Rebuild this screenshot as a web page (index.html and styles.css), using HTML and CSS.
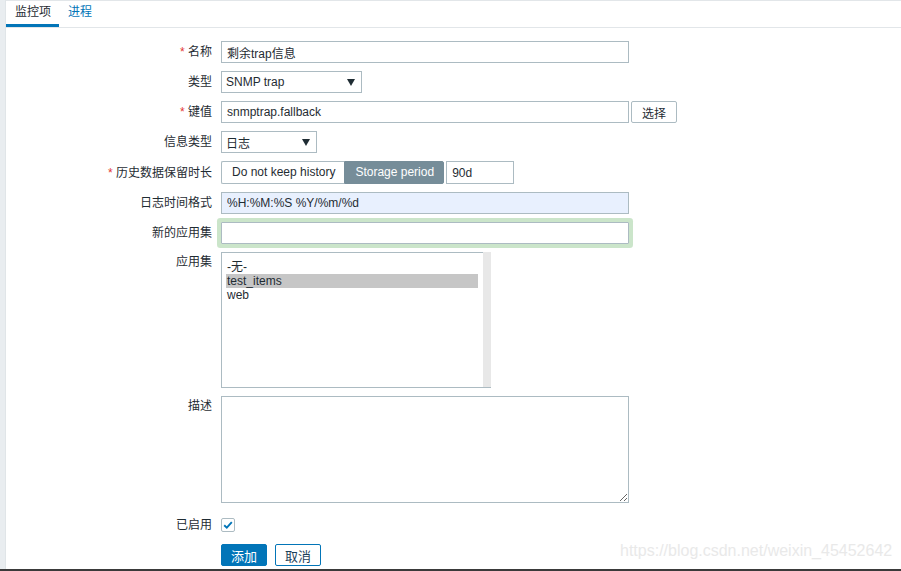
FILE: index.html
```html
<!DOCTYPE html>
<html lang="zh">
<head>
<meta charset="utf-8">
<title>监控项</title>
<link rel="stylesheet" href="styles.css">
</head>
<body>
<div class="page">
  <div class="sidebar"></div>
  <div class="main">
    <div class="tabs">
      <div class="tab active">监控项</div>
      <div class="tab link">进程</div>
    </div>
    <div class="form">
      <div class="row">
        <div class="label"><span class="req">*</span> 名称</div>
        <div class="field"><input class="text w408" value="剩余trap信息"></div>
      </div>
      <div class="row">
        <div class="label">类型</div>
        <div class="field">
          <div class="select w141"><span>SNMP trap</span><svg class="arrow" width="8" height="7" viewBox="0 0 8 7"><polygon points="0,0 8,0 4,7" fill="#1f2c33"/></svg></div>
        </div>
      </div>
      <div class="row">
        <div class="label"><span class="req">*</span> 键值</div>
        <div class="field"><input class="text w408" value="snmptrap.fallback"><button class="btn-grey">选择</button></div>
      </div>
      <div class="row">
        <div class="label">信息类型</div>
        <div class="field">
          <div class="select w96"><span>日志</span><svg class="arrow" width="8" height="7" viewBox="0 0 8 7"><polygon points="0,0 8,0 4,7" fill="#1f2c33"/></svg></div>
        </div>
      </div>
      <div class="row tall">
        <div class="label"><span class="req">*</span> 历史数据保留时长</div>
        <div class="field">
          <div class="seg">
            <div class="seg-btn">Do not keep history</div>
            <div class="seg-btn on">Storage period</div>
          </div>
          <input class="text w68 h23" value="90d">
        </div>
      </div>
      <div class="row">
        <div class="label">日志时间格式</div>
        <div class="field"><input class="text w408 filled" value="%H:%M:%S %Y/%m/%d"></div>
      </div>
      <div class="row">
        <div class="label">新的应用集</div>
        <div class="field"><input class="text w408 focus" value=""></div>
      </div>
      <div class="row top">
        <div class="label">应用集</div>
        <div class="field">
          <div class="listbox">
            <div class="items">
              <div class="item">-无-</div>
              <div class="item sel">test_items</div>
              <div class="item">web</div>
            </div>
            <div class="track"></div>
          </div>
        </div>
      </div>
      <div class="row top">
        <div class="label">描述</div>
        <div class="field"><textarea class="area"></textarea></div>
      </div>
      <div class="row check-row">
        <div class="label">已启用</div>
        <div class="field">
          <div class="checkbox"><svg width="12" height="12" viewBox="0 0 12 12"><path d="M2.2 6.2 L4.8 8.6 L9.8 3.2" fill="none" stroke="#0275b8" stroke-width="1.9"/></svg></div>
        </div>
      </div>
      <div class="row buttons">
        <div class="label"></div>
        <div class="field"><button class="btn-main">添加</button><button class="btn-alt">取消</button></div>
      </div>
    </div>
  </div>
  <div class="watermark">https://blog.csdn.net/weixin_45452642</div>
  <div class="bottombar"></div>
</div>
</body>
</html>
```
FILE: styles.css
```css
* { box-sizing: border-box; }
html, body { margin: 0; padding: 0; }
body {
  width: 901px;
  height: 571px;
  overflow: hidden;
  font-family: "Liberation Sans", Arial, "Noto Sans CJK SC", sans-serif;
  font-size: 12px;
  color: #1f2c33;
  background: #fff;
}
.page {
  position: relative;
  display: flex;
  width: 901px;
  height: 571px;
}
.sidebar {
  width: 6px;
  flex: none;
  background: #e9edf0;
  border-right: 1px solid #e0e5e8;
}
.main {
  flex: 1;
  background: #fff;
  border-top: 1px solid #e2e6e9;
}
.tabs {
  display: flex;
  height: 26px;
  border-bottom: 1px solid #e2e6e9;
  box-sizing: content-box;
}
.tab {
  height: 26px;
  line-height: 22px;
  padding: 0 8px 0 9px;
  border-bottom: 3px solid transparent;
  color: #1f2c33;
}
.tab.active { border-bottom-color: #0275b8; }
.tab.link { color: #0275b8; padding-left: 9px; }
.form {
  display: flex;
  flex-direction: column;
  gap: 8px;
  padding-top: 13px;
}
.row {
  display: flex;
  align-items: center;
  gap: 9px;
}
.row.top { align-items: flex-start; }
.label {
  width: 206px;
  flex: none;
  text-align: right;
  line-height: 22px;
  white-space: nowrap;
}
.row.top .label { line-height: 21px; padding-top: 0; }
.req { color: #e33734; }
.field {
  display: flex;
  align-items: center;
  gap: 2px;
}
.text {
  height: 22px;
  border: 1px solid #acbbc2;
  background: #fff;
  padding: 0 5px;
  font: inherit;
  color: #1f2c33;
  outline: none;
  margin: 0;
}
.w408 { width: 408px; }
.w68 { width: 68px; }
.h23 { height: 23px; }
.filled { background: #e8f0fe; }
.focus { box-shadow: 0 0 0 4px #cbe5ca; border-radius: 1px; }
.select {
  display: flex;
  align-items: center;
  justify-content: space-between;
  height: 22px;
  border: 1px solid #acbbc2;
  background: #fff;
  padding: 0 6px 0 4px;
}
.w141 { width: 141px; }
.w96 { width: 96px; }
.arrow { display: block; }
.btn-grey {
  height: 22px;
  width: 46px;
  border: 1px solid #acbbc2;
  background: #fff;
  font: inherit;
  color: #1f2c33;
  padding: 0;
  margin: 0;
  border-radius: 2px;
}
.seg { display: flex; }
.seg-btn {
  height: 23px;
  line-height: 21px;
  padding: 0 9px 0 10px;
  border: 1px solid #acbbc2;
  background: #fff;
  white-space: nowrap;
}
.seg-btn:first-child { border-radius: 2px 0 0 2px; border-right: none; }
.seg-btn.on {
  background: #768d99;
  border-color: #768d99;
  color: #fff;
  border-radius: 0 2px 2px 0;
}
.listbox {
  display: flex;
  width: 270px;
  height: 136px;
  border: 1px solid #acbbc2;
  border-right: none;
  background: #fff;
}
.items {
  flex: 1;
  padding: 7px 5px 0 4px;
}
.item {
  height: 14px;
  line-height: 14px;
  padding-left: 1px;
  white-space: nowrap;
}
.item.sel { background: #c6c6c6; }
.track {
  width: 8px;
  flex: none;
  margin-top: -1px;
  background: #e8e8e8;
}
.area {
  display: block;
  width: 408px;
  height: 107px;
  border: 1px solid #acbbc2;
  margin: 0;
  padding: 4px 5px;
  font: inherit;
  resize: both;
  outline: none;
}
.check-row { margin-top: 3px; }
.checkbox {
  width: 14px;
  height: 14px;
  border: 1px solid #acbbc2;
  border-radius: 2px;
  background: #fff;
  display: flex;
  align-items: center;
  justify-content: center;
}
.checkbox svg { display: block; }
.buttons { margin-top: 0; }
.buttons .field { gap: 8px; }
.btn-main {
  height: 22px;
  width: 46px;
  border: 1px solid #0275b8;
  background: #0275b8;
  color: #fff;
  font: inherit;
  font-size: 13px;
  border-radius: 2px;
  padding: 0;
  margin: 0;
}
.btn-alt {
  height: 22px;
  width: 46px;
  border: 1px solid #0275b8;
  background: #fff;
  color: #1f3f5a;
  font: inherit;
  font-size: 13px;
  border-radius: 2px;
  padding: 0;
  margin: 0;
}
.watermark {
  position: absolute;
  left: 620px;
  top: 542px;
  font-size: 16px;
  color: #e9e9e9;
  white-space: nowrap;
  font-family: "Liberation Sans", Arial, sans-serif;
}
.bottombar {
  position: absolute;
  left: 0;
  right: 0;
  bottom: 0;
  height: 2px;
  background: #3a3a3a;
}
```
